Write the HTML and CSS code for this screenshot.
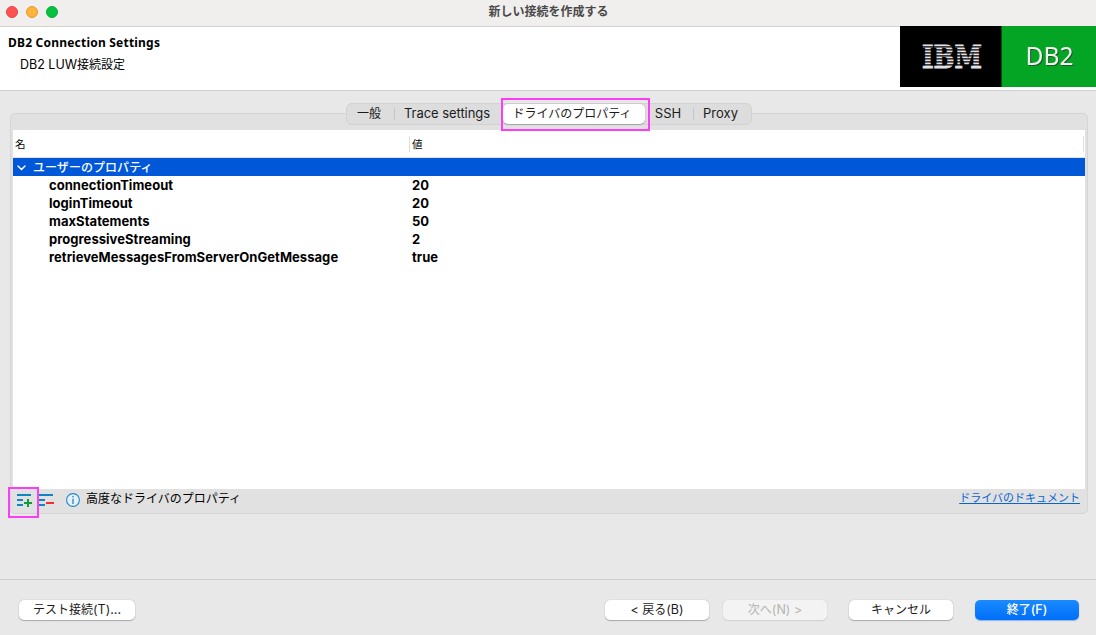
FILE: index.html
```html
<!DOCTYPE html>
<html lang="ja">
  <head>
    <meta charset="utf-8">
    <title>新しい接続を作成する</title>
    <link rel="stylesheet" href="styles.css">
  </head>
  <body>
    <div class="window">
      <div class="titlebar">
        <div class="lights">
          <span class="light red"></span>
          <span class="light yellow"></span>
          <span class="light green"></span>
        </div>
        <div class="title">新しい接続を作成する</div>
      </div>

      <div class="header">
        <div class="header-text">
          <div class="heading">DB2 Connection Settings</div>
          <div class="subheading"><span class="latin">DB2 LUW</span>接続設定</div>
        </div>
        <svg class="logo" width="196" height="61" viewBox="0 0 196 61">
          <rect width="102" height="61" fill="#000" />
          <rect x="101.5" width="94.5" height="61" fill="#04a524" />
          <text class="ibm" x="22" y="41.5" textLength="60" lengthAdjust="spacingAndGlyphs">IBM</text>
          <path d="M20 20.9h64M20 23.9h64M20 26.9h64M20 29.9h64M20 32.9h64M20 35.9h64M20 38.9h64" stroke="#000" stroke-width="1.1" />
          <text class="db2" x="125.5" y="39" textLength="48" lengthAdjust="spacingAndGlyphs">DB2</text>
        </svg>
      </div>

      <div class="content">
        <div class="tabs">
          <div class="tab general">一般</div>
          <div class="tab trace">Trace settings</div>
          <div class="tab active">ドライバのプロパティ</div>
          <div class="tab ssh">SSH</div>
          <div class="tab proxy">Proxy</div>
        </div>

        <div class="group">
          <div class="table">
            <div class="table-head">
              <div class="col-name">名</div>
              <div class="col-value">値</div>
            </div>
            <div class="row selected">
              <svg class="chevron" width="9" height="6" viewBox="0 0 9 6">
                <path d="M1 1l3.5 3.6L8 1" fill="none" stroke="#fff" stroke-width="1.4" stroke-linecap="round" />
              </svg>
              <span>ユーザーのプロパティ</span>
            </div>
            <div class="row"><div class="name">connectionTimeout</div><div>20</div></div>
            <div class="row"><div class="name">loginTimeout</div><div>20</div></div>
            <div class="row"><div class="name">maxStatements</div><div>50</div></div>
            <div class="row"><div class="name">progressiveStreaming</div><div>2</div></div>
            <div class="row"><div class="name">retrieveMessagesFromServerOnGetMessage</div><div>true</div></div>
          </div>

          <div class="toolbar">
            <div class="tool add">
              <svg width="16" height="14" viewBox="0 0 16 14">
                <path d="M1 1h14M1 6h6M1 11h6" stroke="#0f86c3" stroke-width="2" />
                <path d="M8 9h8M12 5v8" stroke="#109c3b" stroke-width="2" />
              </svg>
            </div>
            <div class="tool remove">
              <svg width="16" height="14" viewBox="0 0 16 14">
                <path d="M1 1h14M1 6h6M1 11h6" stroke="#0f86c3" stroke-width="2" />
                <path d="M8 9h8" stroke="#fa2a2d" stroke-width="2" />
              </svg>
            </div>
            <svg class="info" width="14" height="14" viewBox="0 0 14 14">
              <circle cx="7" cy="7" r="6.4" fill="#e9f0f5" stroke="#2187c9" stroke-width="1.1" />
              <path d="M7 3v1.6M7 5.8v5.2" stroke="#2187c9" stroke-width="1.3" />
            </svg>
            <div class="label">高度なドライバのプロパティ</div>
            <a class="doc-link" href="#">ドライバのドキュメント</a>
          </div>
        </div>
      </div>

      <div class="footer">
        <button class="button test">テスト接続<span class="latin">(T)...</span></button>
        <button class="button back"><span class="latin">&lt; </span>戻る<span class="latin">(B)</span></button>
        <button class="button next" disabled>次へ<span class="latin">(N) &gt;</span></button>
        <button class="button cancel">キャンセル</button>
        <button class="button finish">終了<span class="latin">(F)</span></button>
      </div>
    </div>
  </body>
</html>
```

FILE: styles.css
```css
*,
*::after {
  box-sizing: border-box;
}

body {
  margin: 0;
  font-family: Inter, "Noto Sans CJK JP", sans-serif;
  font-size: 12px;
  color: #1c1c1c;
}

.window {
  display: flex;
  flex-direction: column;
  width: 1096px;
  height: 635px;
  overflow: hidden;
  background: #e8e8e8;
}

.latin {
  font-size: 12.5px;
}

/* title bar */
.titlebar {
  display: grid;
  grid-template-columns: 100px 1fr 100px;
  align-items: center;
  height: 27px;
  padding-bottom: 3px;
  background: #f0efee;
  border-bottom: 1px solid #d3d3d2;
}

.lights {
  display: flex;
  gap: 8px;
  padding-left: 6px;
}

.light {
  width: 12px;
  height: 12px;
  border-radius: 50%;
}

.red { background: #ff5152; border: 1px solid #e5433f; }
.yellow { background: #ffb33c; border: 1px solid #df9a34; }
.green { background: #05c33e; border: 1px solid #07ad35; }

.title {
  padding-left: 1px;
  text-align: center;
  line-height: 24px;
  font-weight: 600;
  color: #4a4a4a;
}

/* wizard header */
.header {
  display: flex;
  justify-content: space-between;
  height: 64px;
  background: #fff;
  border-bottom: 1px solid #d0d0d0;
}

.header-text {
  padding: 7px 0 0 8px;
  color: #000;
}

.heading {
  font-family: "Noto Sans", sans-serif;
  font-weight: bold;
  line-height: 18px;
  letter-spacing: 0.21px;
}

.subheading {
  margin-top: 4px;
  padding-left: 12px;
  line-height: 18px;
}

.logo {
  margin-top: -1px;
}

.ibm {
  font-family: "DejaVu Serif", serif;
  font-weight: bold;
  font-size: 32px;
  fill: #e2e2e6;
  stroke: #e2e2e6;
  stroke-width: 1px;
}

.db2 {
  font-family: "Noto Sans", sans-serif;
  font-size: 26px;
  fill: #eef3ee;
  filter: drop-shadow(1px 1px 0.5px #23542b);
}

/* tabs and properties */
.content {
  flex: 1;
  padding: 12px 8px 0 10px;
}

.tabs {
  position: relative;
  z-index: 1;
  display: flex;
  width: 406px;
  height: 22px;
  margin-left: 336px;
  background: #dddddd;
  border: 1px solid #d2d2d2;
  border-radius: 6px;
}

.tab {
  height: 20px;
  line-height: 19px;
  text-align: center;
  font-size: 13px;
  white-space: nowrap;
}

.general { width: 48px; padding-right: 4px; font-size: 12px; }
.trace { width: 108px; padding-right: 4px; letter-spacing: -0.05px; }
.ssh { width: 48px; padding-right: 2px; }
.proxy { width: 52px; padding-left: 3px; }

.general::after,
.ssh::after {
  content: "";
  float: right;
  width: 1px;
  height: 12px;
  margin: 4px -4px 0 0;
  background: #c6c6c6;
}

.ssh::after {
  margin-right: -3px;
}

.active {
  position: relative;
  width: 142px;
  padding-right: 4px;
  background: #fff;
  border-radius: 5px;
  font-size: 12px;
  line-height: 20px;
  box-shadow: 0 1px 1px #a5a5a5, 0 0 1px #999;
}

.active::after,
.add::after {
  content: "";
  position: absolute;
  border: 2px solid #fb3df4;
}

.active::after {
  left: -2px;
  top: -6px;
  width: 149px;
  height: 33px;
}

.group {
  height: 401px;
  margin-top: -12px;
  padding: 16px 2px 0;
  background: #e1e1e1;
  border: 1px solid #d5d5d5;
  border-radius: 5px;
}

.table {
  height: 359px;
  background: #fff;
  color: #000;
}

.table-head {
  display: flex;
  align-items: center;
  height: 28px;
  font-size: 10.5px;
  border-bottom: 1px solid #e2e2e2;
  padding-right: 1px;
}

.col-name {
  width: 396px;
  padding-left: 2px;
}

.col-value {
  flex: 1;
  height: 16px;
  line-height: 17px;
  padding-left: 2px;
  border-left: 1px solid #dedede;
  border-right: 1px solid #dedede;
}

.row {
  display: flex;
  align-items: center;
  height: 18px;
  font-size: 13px;
  font-weight: bold;
  letter-spacing: 0.05px;
}

.name {
  width: 399px;
  padding-left: 36px;
}

.selected {
  background: #0058d8;
  color: #fff;
  font-size: 12px;
  font-weight: 500;
}

.selected span {
  padding-bottom: 2px;
}

.chevron {
  margin: 1px 7px 0 4px;
}

.toolbar {
  display: flex;
  height: 23px;
}

.tool {
  position: relative;
  width: 22px;
  padding: 5px 0 0 3px;
}

.add::after {
  left: -5px;
  top: -2px;
  width: 31px;
  height: 31px;
}

.info {
  margin: 4px 6px 0 9px;
}

.label {
  flex: 1;
  line-height: 19px;
  color: #000;
}

.doc-link {
  margin-right: 5px;
  font-size: 11px;
  line-height: 19px;
  color: #0b63ce;
}

/* buttons */
.footer {
  display: flex;
  height: 56px;
  padding: 20px 17px 0 19px;
  border-top: 1px solid #cdcdcd;
}

.button {
  width: 104px;
  height: 20px;
  padding: 0;
  border: none;
  border-radius: 5px;
  background: #fff;
  box-shadow: 0 1px 1px #a9a9a9, 0 0 1px #999;
  font-family: inherit;
  font-size: 12px;
  line-height: 18px;
  color: #1c1c1c;
  white-space: pre;
}

.test {
  width: 116px;
  margin-right: auto;
}

.next {
  margin: 0 22px 0 14px;
  background: #f3f3f3;
  color: #b4b4b4;
  box-shadow: 0 1px 1px #cfcfcf, 0 0 1px #bbb;
}

.finish {
  margin-left: 22px;
  background: linear-gradient(#1a8bff, #006df8);
  color: #fff;
  font-weight: 500;
  box-shadow: 0 1px 1px #8db5e4;
}
```
